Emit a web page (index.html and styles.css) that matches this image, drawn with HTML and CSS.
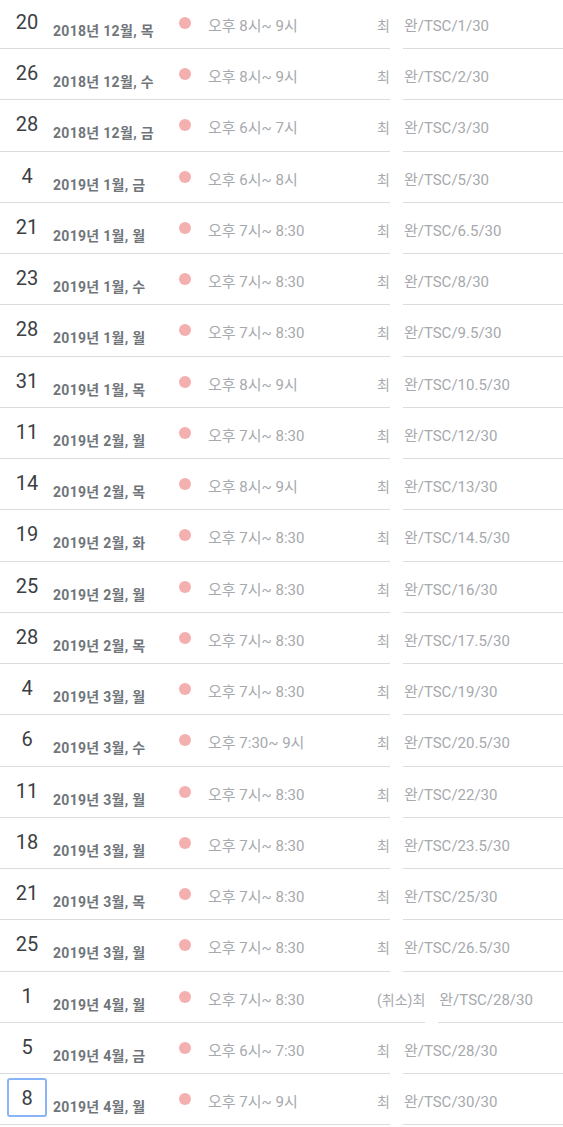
FILE: index.html
```html
<!DOCTYPE html>
<html lang="ko">
  <head>
    <meta charset="UTF-8" />
    <meta name="viewport" content="width=device-width, initial-scale=1.0" />
    <title>일정</title>
    <link rel="stylesheet" href="styles.css">
  </head>
  <body>
    <main id="agenda"></main>

    <script>
      const events = [
        ["20", "2018년 12월, 목", "오후 8시~ 9시", "최", "완/TSC/1/30"],
        ["26", "2018년 12월, 수", "오후 8시~ 9시", "최", "완/TSC/2/30"],
        ["28", "2018년 12월, 금", "오후 6시~ 7시", "최", "완/TSC/3/30"],
        ["4", "2019년 1월, 금", "오후 6시~ 8시", "최", "완/TSC/5/30"],
        ["21", "2019년 1월, 월", "오후 7시~ 8:30", "최", "완/TSC/6.5/30"],
        ["23", "2019년 1월, 수", "오후 7시~ 8:30", "최", "완/TSC/8/30"],
        ["28", "2019년 1월, 월", "오후 7시~ 8:30", "최", "완/TSC/9.5/30"],
        ["31", "2019년 1월, 목", "오후 8시~ 9시", "최", "완/TSC/10.5/30"],
        ["11", "2019년 2월, 월", "오후 7시~ 8:30", "최", "완/TSC/12/30"],
        ["14", "2019년 2월, 목", "오후 8시~ 9시", "최", "완/TSC/13/30"],
        ["19", "2019년 2월, 화", "오후 7시~ 8:30", "최", "완/TSC/14.5/30"],
        ["25", "2019년 2월, 월", "오후 7시~ 8:30", "최", "완/TSC/16/30"],
        ["28", "2019년 2월, 목", "오후 7시~ 8:30", "최", "완/TSC/17.5/30"],
        ["4", "2019년 3월, 월", "오후 7시~ 8:30", "최", "완/TSC/19/30"],
        ["6", "2019년 3월, 수", "오후 7:30~ 9시", "최", "완/TSC/20.5/30"],
        ["11", "2019년 3월, 월", "오후 7시~ 8:30", "최", "완/TSC/22/30"],
        ["18", "2019년 3월, 월", "오후 7시~ 8:30", "최", "완/TSC/23.5/30"],
        ["21", "2019년 3월, 목", "오후 7시~ 8:30", "최", "완/TSC/25/30"],
        ["25", "2019년 3월, 월", "오후 7시~ 8:30", "최", "완/TSC/26.5/30"],
        ["1", "2019년 4월, 월", "오후 7시~ 8:30", "(취소)최", "완/TSC/28/30"],
        ["5", "2019년 4월, 금", "오후 6시~ 7:30", "최", "완/TSC/28/30"],
        ["8", "2019년 4월, 월", "오후 7시~ 9시", "최", "완/TSC/30/30"],
      ];

      let html = "";
      events.forEach(function (ev, i) {
        const focus = i === events.length - 1 ? " focused" : "";
        html +=
          "<div class='row'>" +
          "<div class='main'>" +
          "<p class='day" + focus + "'>" + ev[0] + "</p>" +
          "<p class='date'>" + ev[1] + "</p>" +
          "<span class='dot'></span>" +
          "<p class='time'>" + ev[2] + "</p>" +
          "<p class='who'>" + ev[3] + "</p>" +
          "</div>" +
          "<p class='title'>" + ev[4] + "</p>" +
          "</div>";
      });
      document.getElementById("agenda").innerHTML = html;
    </script>
  </body>
</html>
```

FILE: styles.css
```css
html,
body {
  overflow: hidden;
}
body {
  margin: 0;
  background-color: #fff;
  font-family: Roboto, "Noto Sans CJK KR", sans-serif;
  color: #3c4043;
}
p {
  margin: 0;
}
#agenda {
  margin-top: -2.25px;
}
.row {
  display: flex;
  height: 51.25px;
}
.main {
  display: flex;
  align-items: flex-start;
  border-bottom: 1px solid #dadce0;
  box-sizing: border-box;
  height: 100%;
}
.day {
  box-sizing: border-box;
  width: 40px;
  height: 39px;
  margin: 4px 0 0 7px;
  padding-top: 1px;
  border: 2px solid transparent;
  border-radius: 3px;
  font-size: 20px;
  line-height: 34px;
  text-align: center;
  color: #3c4043;
}
.focused {
  border-color: #8ab4f8;
}
.date {
  width: 126px;
  margin-left: 6px;
  padding-top: 25px;
  font-size: 14px;
  line-height: 16px;
  letter-spacing: 0.3px;
  font-weight: bold;
  color: #70757a;
  white-space: nowrap;
}
.dot {
  flex: none;
  width: 12px;
  height: 12px;
  margin-top: 19px;
  border-radius: 50%;
  background-color: #f3b0ae;
}
.time,
.who,
.title {
  padding-top: 20px;
  font-size: 15px;
  line-height: 16px;
  color: #a6a9ad;
  white-space: nowrap;
}
.who {
  font-size: 14px;
}
.time {
  width: 169px;
  margin-left: 17px;
}
.title {
  flex: 1;
  margin-left: 13px;
  padding-left: 1px;
  border-bottom: 1px solid #dadce0;
  box-sizing: border-box;
  height: 100%;
}
```
